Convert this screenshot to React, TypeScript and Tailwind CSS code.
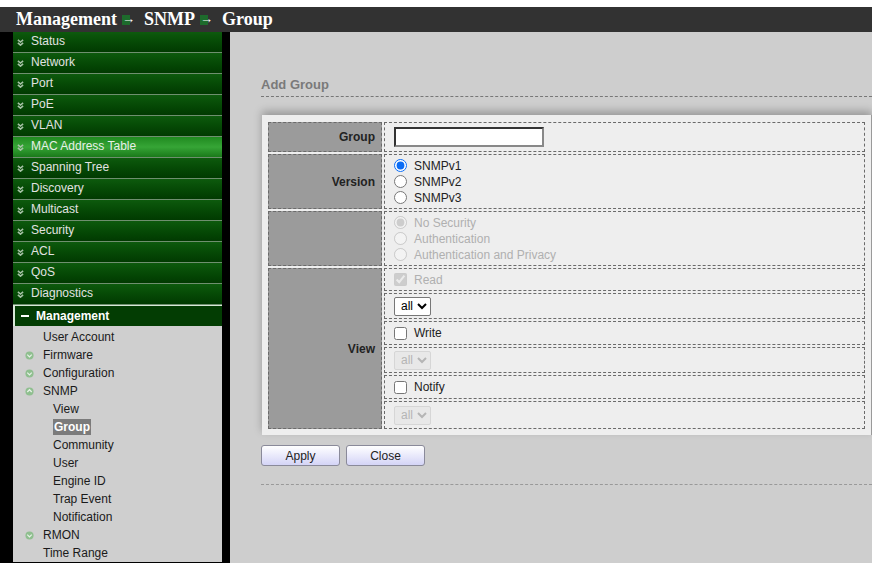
import { useState } from "react";

const topMenu = [
    "Status", "Network", "Port", "PoE", "VLAN", "MAC Address Table", "Spanning Tree",
    "Discovery", "Multicast", "Security", "ACL", "QoS", "Diagnostics",
];

type SubItem = { label: string; icon?: "down" | "up"; level: 1 | 2; active?: boolean };

const subMenu: SubItem[] = [
    { label: "User Account", level: 1 },
    { label: "Firmware", icon: "down", level: 1 },
    { label: "Configuration", icon: "down", level: 1 },
    { label: "SNMP", icon: "up", level: 1 },
    { label: "View", level: 2 },
    { label: "Group", level: 2, active: true },
    { label: "Community", level: 2 },
    { label: "User", level: 2 },
    { label: "Engine ID", level: 2 },
    { label: "Trap Event", level: 2 },
    { label: "Notification", level: 2 },
    { label: "RMON", icon: "down", level: 1 },
    { label: "Time Range", level: 1 },
];

function Chevrons({ color }: { color: string }) {
    return (
        <svg width="7" height="7" viewBox="0 0 8 8">
            <path d="M1 1 L4 3.5 L7 1 M1 4.5 L4 7 L7 4.5" fill="none" stroke={color} strokeWidth="1.8" />
        </svg>
    );
}

function CircleChevron({ up }: { up?: boolean }) {
    return (
        <svg width="9" height="9" viewBox="0 0 10 10">
            <circle cx="5" cy="5" r="4.5" fill="#8fbf8f" />
            <path d={up ? "M2.5 5.5 L5 3 L7.5 5.5" : "M2.5 4 L5 6.5 L7.5 4"} fill="none" stroke="#e8f2e8" strokeWidth="1.4" />
        </svg>
    );
}

function Arrow() {
    return (
        <span className="relative inline-block w-[12px] h-[10px] ml-[5px] mr-[10px] align-middle">
            <span className="absolute left-0 top-0 w-[8px] h-[10px] bg-[#1d6b2c]" />
            <span className="absolute left-0 -top-[5px] text-white text-[13px] font-bold leading-[18px] font-['Liberation_Sans',sans-serif]">
                →
            </span>
        </span>
    );
}

function Sidebar() {
    return (
        <aside className="w-[230px] shrink-0 bg-black pl-[13px] pr-[8px] h-[531px] overflow-hidden">
            {topMenu.map((item) => {
                const hot = item === "MAC Address Table";
                return (
                    <div
                        key={item}
                        className={
                            "h-[21px] flex items-center gap-[7px] pl-[4px] border-b border-[#6f8f6f] text-[12px] leading-[18px] " +
                            (hot
                                ? "bg-gradient-to-b from-[#1f8a1f] via-[#36a536] to-[#1a7a1a] text-[#e8f0e8]"
                                : "bg-gradient-to-b from-[#0d5a0d] to-[#013a01] text-[#e2e2e2]")
                        }
                    >
                        <Chevrons color="#a7c2a7" />
                        <span className="-mt-[2px]">{item}</span>
                    </div>
                );
            })}
            <div className="h-[21px] flex items-center gap-[7px] pl-[6px] bg-[#033d03] border-l-2 border-t border-[#d8e8d8] text-white text-[12px] font-bold">
                <span className="w-[8px] h-[2px] bg-white" />
                <span>Management</span>
            </div>
            <div className="bg-[#cfcfcf] pt-[2px] text-[12px] text-[#1a1a1a]">
                {subMenu.map((s) => (
                    <div key={s.label} className="h-[18px] flex items-center">
                        <span className="w-[30px] flex justify-center pl-[2px]">
                            {s.icon && <CircleChevron up={s.icon === "up"} />}
                        </span>
                        <span className={s.level === 2 ? "pl-[10px]" : ""}>
                            <span className={s.active ? "bg-[#7b7b7b] text-white font-bold px-[1px] py-[1px]" : ""}>
                                {s.label}
                            </span>
                        </span>
                    </div>
                ))}
            </div>
        </aside>
    );
}

function Select({ disabled }: { disabled?: boolean }) {
    return (
        <select
            disabled={disabled}
            className={
                "h-[19px] w-[37px] text-[12px] pl-[2px] border rounded-[2px] " +
                (disabled ? "border-[#d6d6d6] bg-[#e8e8e8] text-[#b5b5b5]" : "border-[#777] bg-white text-black")
            }
        >
            <option>all</option>
        </select>
    );
}

const cell = "border border-dashed border-[#6a6a6a]";

export default function App() {
    const [version, setVersion] = useState("v1");
    const [write, setWrite] = useState(false);
    const [notify, setNotify] = useState(false);

    return (
        <div className="w-[872px] h-[563px] bg-white pt-[7px] overflow-hidden font-['Liberation_Sans',Arial,sans-serif]">
            <header className="h-[25px] bg-[#323232] pl-[16px] flex items-center text-white font-bold text-[18px] font-['Liberation_Serif','Times_New_Roman',serif]">
                <span>Management</span>
                <Arrow />
                <span>SNMP</span>
                <Arrow />
                <span>Group</span>
            </header>
            <div className="flex">
                <Sidebar />
                <main className="flex-1 bg-[#cecece] h-[531px] pl-[31px]">
                    <h2 className="mt-[45px] text-[13px] leading-[16px] font-bold text-[#7a7a7a] pb-[3px] border-b border-dashed border-[#777]">
                        Add Group
                    </h2>
                    <div className="mt-[18px] ml-[1px] bg-[#eeeeee] border-r border-[#9a9a9a] shadow-[0_-4px_8px_rgba(0,0,0,0.25)] px-[4px] pt-[5px] pb-[4px]">
                        <table className="w-full border-separate border-spacing-[2px] text-[12px] text-[#222]">
                            <tbody>
                                <tr className="h-[30px]">
                                    <td className={cell + " w-[114px] bg-[#9b9b9b] text-right pr-[6px] font-bold"}>Group</td>
                                    <td className={cell + " pl-[9px]"}>
                                        <input className="block w-[150px] h-[20px] bg-white border-2 border-t-[#333] border-l-[#333] border-b-[#888] border-r-[#888] outline-none" />
                                    </td>
                                </tr>
                                <tr className="h-[55px]">
                                    <td className={cell + " bg-[#9b9b9b] text-right pr-[6px] font-bold"}>Version</td>
                                    <td className={cell + " pl-[9px] leading-[16px]"}>
                                        {["v1", "v2", "v3"].map((v) => (
                                            <label key={v} className="flex items-center gap-[7px]">
                                                <input
                                                    type="radio"
                                                    name="ver"
                                                    checked={version === v}
                                                    onChange={() => setVersion(v)}
                                                    className="w-[13px] h-[13px] m-0 accent-[#0a6cf5]"
                                                />
                                                <span>SNMP{v}</span>
                                            </label>
                                        ))}
                                    </td>
                                </tr>
                                <tr className="h-[55px]">
                                    <td className={cell + " bg-[#9b9b9b]"} />
                                    <td className={cell + " pl-[9px] leading-[16px] text-[#b0b0b0]"}>
                                        {["No Security", "Authentication", "Authentication and Privacy"].map((s, i) => (
                                            <label key={s} className="flex items-center gap-[7px]">
                                                <input type="radio" name="sec" disabled defaultChecked={i === 0} className="w-[13px] h-[13px] m-0" />
                                                <span>{s}</span>
                                            </label>
                                        ))}
                                    </td>
                                </tr>
                                <tr className="h-[23px]">
                                    <td rowSpan={6} className={cell + " bg-[#9b9b9b] text-right pr-[6px] font-bold"}>View</td>
                                    <td className={cell + " pl-[9px] text-[#b0b0b0]"}>
                                        <label className="flex items-center gap-[7px]">
                                            <input type="checkbox" disabled defaultChecked className="w-[13px] h-[13px] m-0" />
                                            <span>Read</span>
                                        </label>
                                    </td>
                                </tr>
                                <tr className="h-[26px]">
                                    <td className={cell + " pl-[9px]"}><Select /></td>
                                </tr>
                                <tr className="h-[24px]">
                                    <td className={cell + " pl-[9px]"}>
                                        <label className="flex items-center gap-[7px]">
                                            <input type="checkbox" checked={write} onChange={() => setWrite(!write)} className="w-[13px] h-[13px] m-0" />
                                            <span>Write</span>
                                        </label>
                                    </td>
                                </tr>
                                <tr className="h-[26px]">
                                    <td className={cell + " pl-[9px]"}><Select disabled={!write} /></td>
                                </tr>
                                <tr className="h-[24px]">
                                    <td className={cell + " pl-[9px]"}>
                                        <label className="flex items-center gap-[7px]">
                                            <input type="checkbox" checked={notify} onChange={() => setNotify(!notify)} className="w-[13px] h-[13px] m-0" />
                                            <span>Notify</span>
                                        </label>
                                    </td>
                                </tr>
                                <tr className="h-[28px]">
                                    <td className={cell + " pl-[9px]"}><Select disabled={!notify} /></td>
                                </tr>
                            </tbody>
                        </table>
                    </div>
                    <div className="flex gap-[6px] mt-[10px]">
                        {["Apply", "Close"].map((b) => (
                            <button
                                key={b}
                                className="w-[79px] h-[21px] text-[12px] text-[#222] rounded-[3px] border border-[#8a8a9a] bg-gradient-to-b from-white to-[#d4d4f6]"
                            >
                                {b}
                            </button>
                        ))}
                    </div>
                    <div className="mt-[18px] border-b border-dashed border-[#999]" />
                </main>
            </div>
        </div>
    );
}
